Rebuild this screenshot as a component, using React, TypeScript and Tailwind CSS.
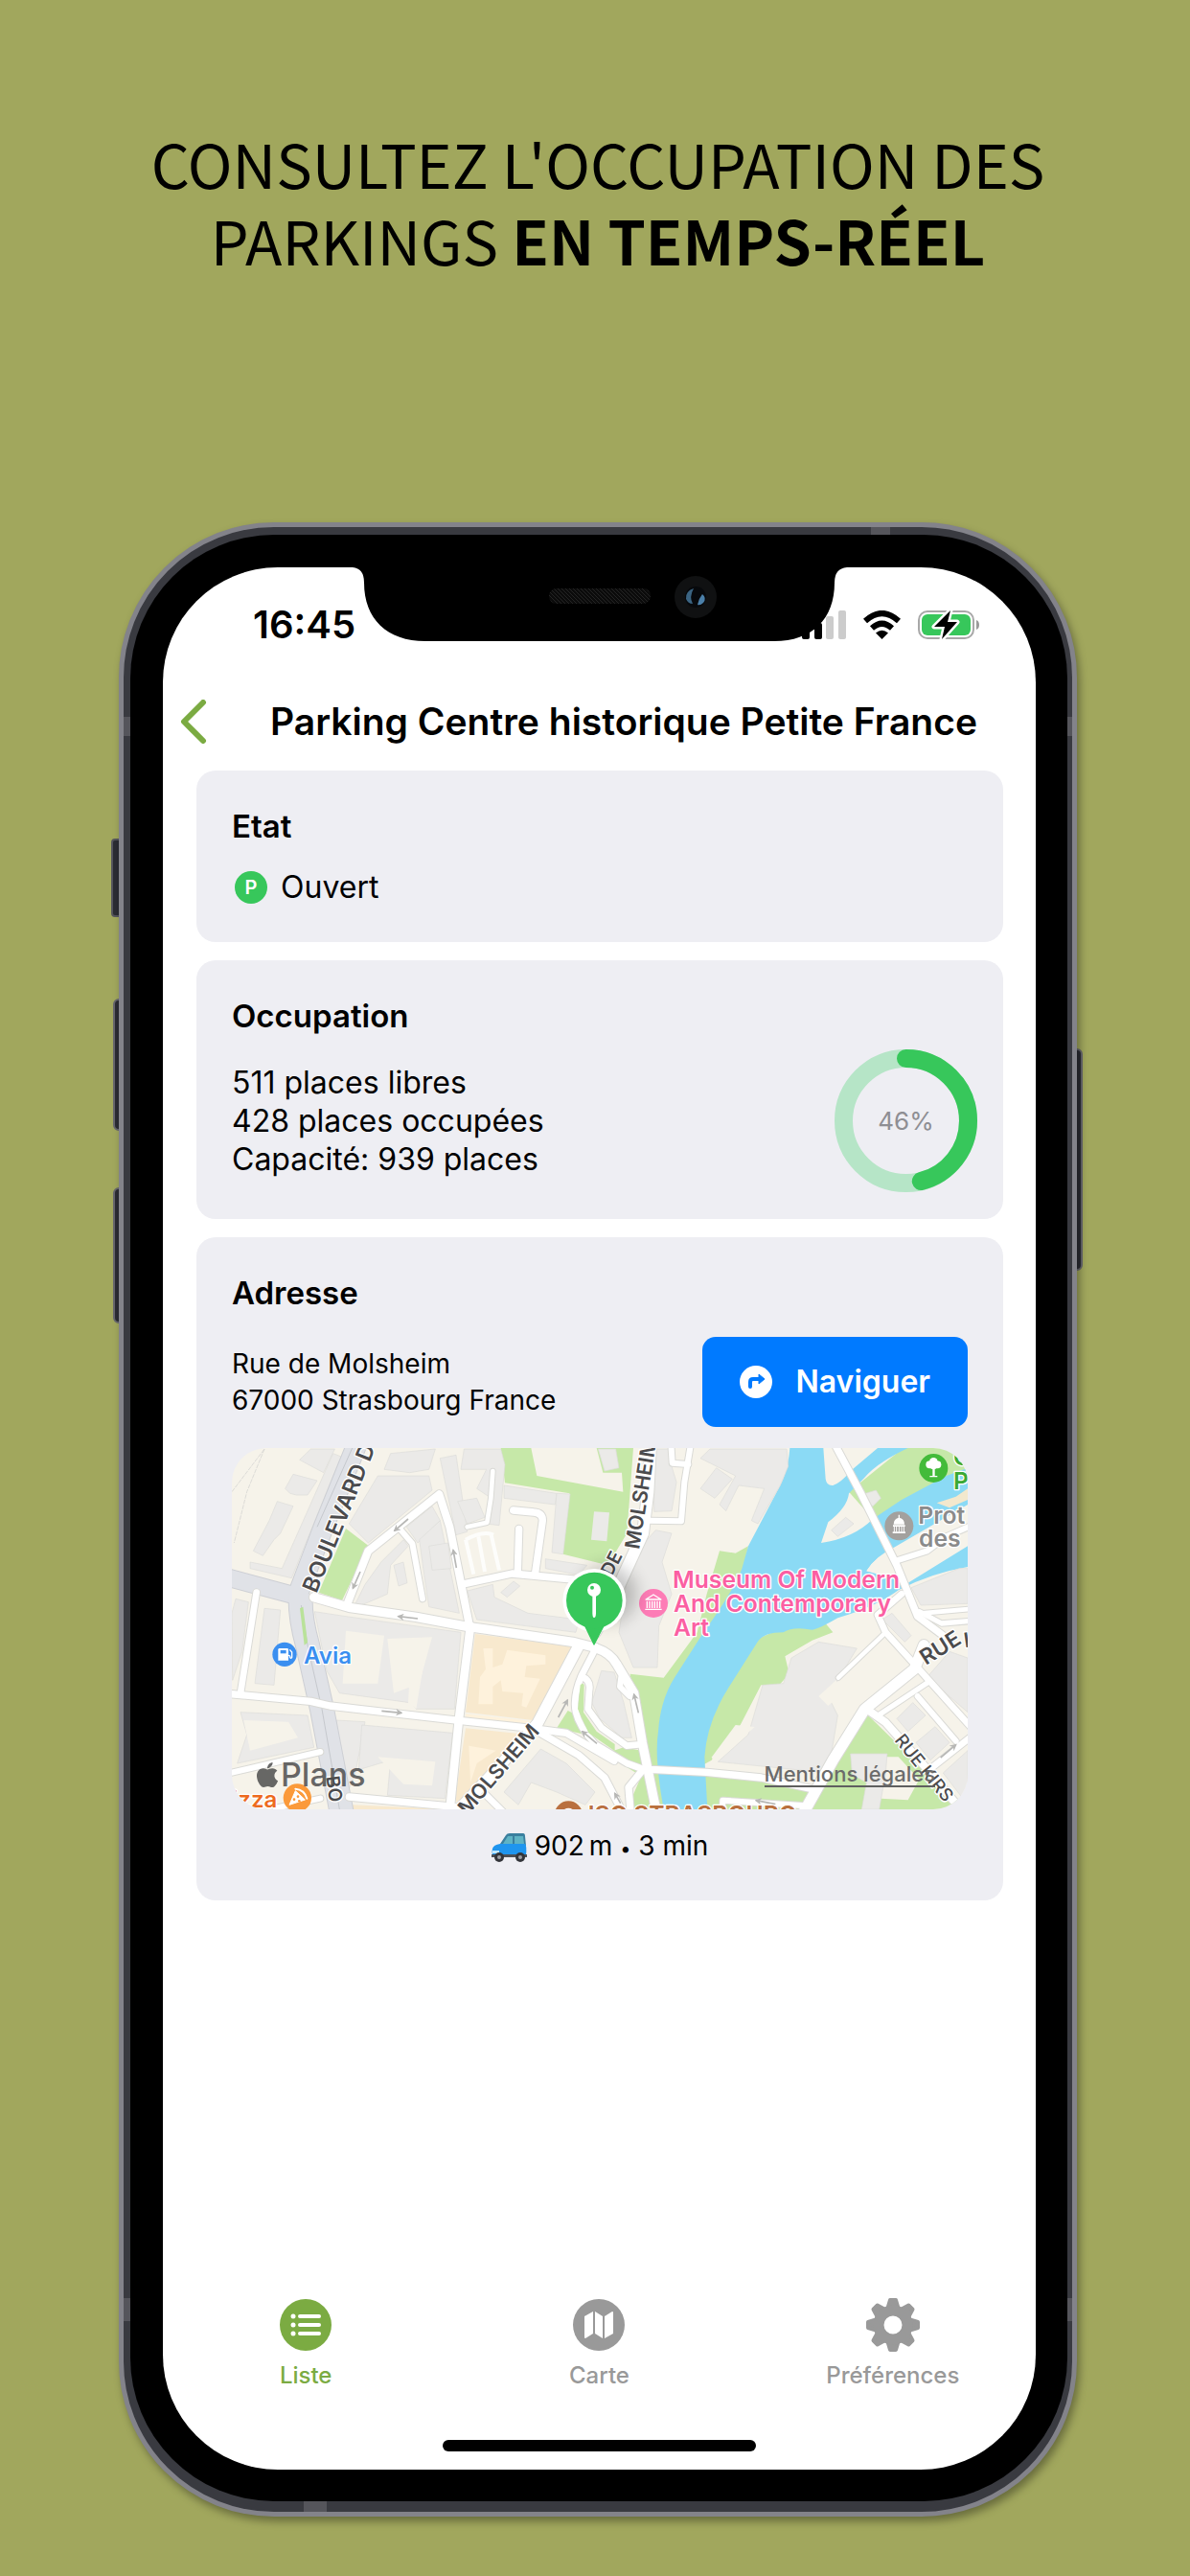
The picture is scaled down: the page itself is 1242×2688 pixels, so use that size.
import type { ReactNode } from 'react';
import { FaApple } from 'react-icons/fa';

type Road = { d: string; w: number };

const roads: Road[] = [
  { d: 'M320 530 L430 562 L640 592 L800 622 L1130 670 L1200 688', w: 28 },
  { d: 'M424 552 L490 385 L712 208 L745 310 L805 610', w: 24 },
  { d: 'M592 320 L628 362 L660 535', w: 18 },
  { d: 'M792 488 L940 456 L1130 474', w: 22 },
  { d: 'M958 450 L962 316', w: 22 },
  { d: 'M1012 460 L1036 290 Q1036 266 1008 264 L944 258', w: 22 },
  { d: 'M880 135 L874 220 L862 296 L800 310', w: 14 },
  { d: 'M810 620 L774 910 L744 1210', w: 26 },
  { d: 'M50 832 L310 856 L370 870 L774 916 L1000 940 L1110 955 L1260 1042', w: 22 },
  { d: 'M140 515 L90 830', w: 20 },
  { d: 'M50 1082 L340 1014', w: 18 },
  { d: 'M200 1190 L340 1160', w: 18 },
  { d: 'M430 1155 L760 1186', w: 22 },
  { d: 'M1374 50 L1366 200 L1350 330 L1240 570 L1200 640', w: 36 },
  { d: 'M1150 680 L1020 925 L900 1060 L760 1210', w: 34 },
  { d: 'M1200 694 L1158 775 Q1130 840 1140 890 Q1150 935 1200 990 L1300 1050 L1350 1068', w: 20 },
  { d: 'M1158 778 Q1188 790 1182 822 L1178 880 L1220 938 L1300 995 L1350 990', w: 20 },
  { d: 'M1200 688 Q1250 705 1268 740 L1322 830 L1348 985 L1394 1210', w: 28 },
  { d: 'M1282 780 L1278 810 L1308 840', w: 18 },
  { d: 'M1012 945 L1150 1025 L1230 1095 L1290 1210', w: 22 },
  { d: 'M1350 1070 L1390 1070 L1550 1078 L1720 1095 L1890 1132', w: 22 },
  { d: 'M1350 1070 L1305 1125 L1312 1210', w: 22 },
  { d: 'M860 1150 L920 1210', w: 20 },
  { d: 'M1372 290 L1470 292 L1480 170 L1500 50', w: 18 },
  { d: 'M1438 50 L1442 110 L1492 114', w: 18 },
  { d: 'M1950 50 L2030 200 L2145 430 L2210 590 L2290 650', w: 22 },
  { d: 'M2145 415 L2240 385 L2300 340 L2380 305', w: 18 },
  { d: 'M2160 520 L2085 585 L2110 640 L2205 745 L2380 940', w: 20 },
  { d: 'M2110 640 L1962 782', w: 14 },
  { d: 'M2230 680 L2200 755 L2045 880 L1945 1040 L1850 1210', w: 34 },
  { d: 'M2215 575 L2285 612 L2380 604', w: 16 },
  { d: 'M2225 580 L2380 566', w: 14 },
  { d: 'M2050 880 L2110 922 L2240 1068 L2350 1200', w: 24 },
  { d: 'M2090 898 L2245 795', w: 16 },
  { d: 'M2210 840 L2330 980', w: 18 },
  { d: 'M2240 1075 L2380 965', w: 20 },
  { d: 'M1598 1210 L1600 1166 L1850 1182', w: 18 },
];

const buildings = [
  '275,100 310,66 385,66 350,140',
  '230,190 255,145 330,165 300,210 265,210 245,205',
  '180,290 205,230 255,245 215,330 195,350 160,400 130,385',
  '120,420 220,440 380,80 405,90 250,470 120,440',
  '540,130 560,80 700,66 680,130 620,140',
  '430,300 520,150 680,150 690,195 490,360',
  '715,95 765,85 800,325 765,335',
  '780,130 790,66 905,66 918,115 900,305 860,300 875,220 830,190 860,130',
  '770,230 830,220 855,280 800,300',
  '915,180 1080,205 1075,240 915,220',
  '1080,205 1122,207 1100,395 1065,390',
  '1045,410 1175,430 1150,460 1045,440',
  '445,560 480,490 530,420 600,350 615,370 560,430 550,520 480,550',
  '570,430 600,420 612,485 585,495',
  '610,310 690,245 715,290 645,360',
  '650,350 715,290 775,580 680,560 665,460',
  '680,370 740,360 750,440 690,445',
  '800,510 880,490 885,530 990,580 1150,600 1140,640 830,600',
  '905,515 945,480 965,495 925,530',
  '322,575 420,590 780,640 760,880 640,880 620,860 400,830 360,760',
  '75,535 115,545 95,700 65,790 63,580',
  '165,565 215,570 195,805 135,800',
  '90,890 300,900 320,1000 80,1050 110,960',
  '390,915 480,920 450,1080 430,1130 400,1000',
  '470,930 755,955 730,1160 550,1150 560,1040 460,1070',
  '915,1140 1030,1005 1110,1050 1200,1140 1170,1180 1080,1140 1000,1110 960,1180',
  '1190,860 1220,760 1260,765 1290,860 1315,970 1285,970 1215,910',
  '1210,66 1265,66 1275,125 1230,135',
  '1385,66 1430,66 1440,120 1455,170 1440,260 1385,262',
  '1310,410 1390,320 1440,330 1410,420 1440,520 1400,620 1395,750 1320,750 1275,640',
  '1530,190 1580,125 1630,160 1575,220',
  '1560,66 1800,66 1805,120 1780,180 1710,300 1690,290 1730,190 1650,180 1610,260 1590,240 1640,150 1530,95',
  '1585,1045 1680,960 1725,805 1790,800 1815,720 1900,670 2020,690 1930,840 1960,900 1930,1080',
  '1940,320 1985,280 2010,300 1960,340',
  '2030,210 2080,195 2095,220 2070,245',
  '2190,500 2340,440 2367,440 2367,550 2220,555',
  '2100,600 2130,580 2190,650 2170,670',
  '2240,780 2310,700 2367,720 2367,890',
  '2145,910 2195,860 2235,900 2180,950',
  '2205,985 2265,935 2310,985 2250,1040',
  '2000,1020 2115,1020 2110,1080 2090,1194 2035,1194 2050,1110 2005,1085',
  '2290,1080 2367,1010 2367,1180',
];

const courtyards = [
  '420,635 540,650 520,800 410,800',
  '550,660 690,655 650,800 570,830',
  '620,770 660,760 640,880 615,860',
  '100,915 240,920 270,970 120,1010',
  '520,1030 700,1045 690,1120 600,1115',
  '1900,840 1955,790 1975,830 1930,870',
  '1640,930 1700,936 1570,1050 1566,1030',
];

const shafts = [
  [615, 285, 572, 322], [465, 450, 442, 502], [766, 438, 756, 382], [645, 597, 584, 590],
  [532, 886, 594, 892], [1085, 906, 1114, 852], [1206, 988, 1160, 950], [1336, 892, 1322, 834],
  [1280, 1175, 1262, 1144], [1765, 1178, 1704, 1166], [2282, 1032, 2330, 992],
];

function CityMap() {
  return (
    <svg className="block h-full w-full" viewBox="63 63 2304 1131" preserveAspectRatio="xMidYMid slice" role="img" aria-label="Carte du quartier">
      <defs>
        <marker id="tip" viewBox="0 0 10 10" refX="8" refY="5" markerWidth="22" markerHeight="22" markerUnits="userSpaceOnUse" orient="auto">
          <path d="M0 0 L10 5 L0 10 L3 5 Z" fill="#b7b7b5" />
        </marker>
        <filter id="soft" x="-50%" y="-50%" width="200%" height="200%">
          <feGaussianBlur stdDeviation="26" />
        </filter>
      </defs>
      <rect x="63" y="63" width="2304" height="1131" fill="#f6f3ea" />
      <g fill="#c6e8a8">
        <path d="M905 63 H1000 L1018 150 L1288 200 L1284 140 L1225 140 L1205 63 H1320 L1300 330 L1240 430 L1100 395 L1120 205 L918 172 Z" />
        <path d="M420 315 L490 368 L408 540 L335 515 Z" />
        <path d="M1115 885 L1080 940 L1170 960 L1145 900 Z" />
        <path d="M1590 385 L1640 392 L1680 370 L1660 460 L1600 700 L1480 1194 H1300 L1345 1090 L1230 1020 L1290 1000 L1345 1010 L1310 770 L1415 782 L1520 640 L1550 520 Z" />
        <path d="M1710 660 L1800 620 L1920 610 L1945 640 L1880 665 L1795 715 L1808 770 L1770 812 L1720 805 L1655 930 L1565 1040 L1530 1060 L1530 900 Z" />
        <path d="M1530 1090 L1720 1100 L1890 1135 L1850 1194 H1540 Z" />
        <path d="M2050 895 L2240 1080 L2367 1194 H1870 L1980 1010 Z" />
        <path d="M2165 63 H2367 V240 L2200 270 L2070 285 L1995 200 Z" />
      </g>
      <path fill="#f6f3ea" d="M2110 1030 L2150 1030 L2215 1100 L2180 1165 L2095 1160 Z" />
      <path
        fill="#8bdaf5"
        d="M1810 63 H1915 L1922 160 Q1925 182 1945 180 Q1970 172 2000 135 L2085 63 H2180 Q2080 110 2040 160 L1995 205 Q1990 250 1930 295 L1908 360 Q2010 345 2070 285 L2160 225 L2300 150 L2367 125 V240 L2140 372 Q2080 400 2050 448 L2180 485 L2367 370 V435 Q2250 455 2150 508 Q2080 560 1960 595 Q1900 630 1880 632 Q1820 620 1790 640 Q1730 640 1710 668 L1620 810 Q1550 920 1543 1030 L1552 1194 H1415 Q1385 1030 1398 950 Q1405 850 1450 780 L1540 640 Q1640 500 1660 440 L1680 370 L1780 180 Q1805 130 1810 63 Z"
      />
      <path fill="#f6f3ea" d="M2050 448 Q2080 400 2120 390 L2160 440 L2180 480 L2130 462 Z" />
      <path fill="#f3e8cd" d="M2270 235 L2330 215 L2367 190 V225 L2310 250 Z" />
      <g fill="#f8e9ce">
        <path d="M825 645 L1130 685 L1005 915 L795 890 Z" />
        <path d="M795 940 L990 960 L770 1180 L762 1160 Z" />
        <path d="M440 1180 L745 1194 H440 Z" />
      </g>
      <g fill="#fef2dc">
        <path d="M850 690 L880 690 L880 750 L910 740 L925 695 L1045 712 L1045 740 L985 745 L980 780 L1028 785 L985 875 L970 870 L975 830 L910 825 L905 790 L880 810 L880 865 L835 865 L840 780 L858 755 Z" />
        <path d="M805 995 L890 1010 L830 1050 L810 1110 Z" />
        <path d="M795 895 L1000 918 L1000 935 L795 912 Z" />
      </g>
      <g fill="#ebeae8" stroke="#dddcd9" strokeWidth="2">
        {buildings.map((points) => (
          <polygon key={points} points={points} />
        ))}
      </g>
      <g fill="#f6f3ea">
        {courtyards.map((points) => (
          <polygon key={points} points={points} />
        ))}
      </g>
      <polygon points="1197,262 1245,265 1237,355 1188,350" fill="#ebeae8" />
      <g fill="none" stroke="#fdfdfb" strokeWidth="12">
        <path d="M795 350 L820 458 M835 340 L855 450 M875 335 L900 445 M795 350 Q850 320 882 335" />
      </g>
      <g fill="none" stroke="#cfcfcd" strokeWidth="2" strokeDasharray="14 3">
        <path d="M63 200 L165 66 M165 66 L110 200 L70 360" />
      </g>
      <g fill="none" strokeLinejoin="round">
        <path d="M50 468 L250 522 L300 530" stroke="#cdcfd4" strokeWidth="58" />
        <path d="M270 520 L350 310 L455 50" stroke="#cdcfd4" strokeWidth="66" />
        <path d="M278 520 Q275 590 300 680 L345 880 L408 1210" stroke="#cdcfd4" strokeWidth="78" />
        <path d="M50 468 L250 522 L300 530" stroke="#e0e2e7" strokeWidth="52" />
        <path d="M270 520 L350 310 L455 50" stroke="#e0e2e7" strokeWidth="60" />
        <path d="M278 520 Q275 590 300 680 L345 880 L408 1210" stroke="#e0e2e7" strokeWidth="72" />
        <path d="M280 555 L300 680 L345 880 L400 1194 M330 310 L440 63" stroke="#c5c8cd" strokeWidth="3" />
      </g>
      <path d="M276 565 L286 560 L300 672 L290 680 Z" fill="#b9e29a" />
      <g fill="none" stroke="#dadad6" strokeLinecap="round" strokeLinejoin="round">
        {roads.map((road) => (
          <path key={road.d} d={road.d} strokeWidth={road.w + 6} />
        ))}
      </g>
      <g fill="none" stroke="#ffffff" strokeLinecap="round" strokeLinejoin="round">
        {roads.map((road) => (
          <path key={road.d} d={road.d} strokeWidth={road.w} />
        ))}
      </g>
      <path d="M1154 805 Q1162 795 1166 805 L1164 890 L1205 950 L1262 990 L1262 1012 L1180 955 L1146 880 Z" fill="#c6e8a8" />
      <g stroke="#b7b7b5" strokeWidth="5">
        {shafts.map(([x1, y1, x2, y2]) => (
          <line key={`${x1}-${y1}`} x1={x1} y1={y1} x2={x2} y2={y2} markerEnd="url(#tip)" />
        ))}
      </g>

      <g fontFamily="Inter, sans-serif" paintOrder="stroke" strokeLinejoin="round">
        <g fill="#4b4b4d" stroke="#ffffff" strokeWidth="8" fontWeight="600" fontSize="64">
          <text transform="translate(328 520) rotate(-68)" fontSize="70">BOULEVARD D</text>
          <text transform="translate(1252 468) rotate(-63)" fontSize="58">DE</text>
          <text transform="translate(1338 382) rotate(-81)">MOLSHEIM</text>
          <text transform="translate(800 1215) rotate(-49)">MOLSHEIM</text>
          <text transform="translate(2236 744) rotate(-32)" fontSize="68">RUE</text>
          <text transform="translate(2358 688) rotate(-8)">L</text>
          <text transform="translate(358 1092) rotate(82)" fontSize="58">BO</text>
          <text transform="translate(2136 978) rotate(51)" fontSize="56" fontWeight="500">RUE KIRS</text>
        </g>

        <g stroke="#ffffff" strokeWidth="8" fontWeight="600" fontSize="74">
          <text x="288" y="738" fill="#3b8ff0" fontSize="72">Avia</text>
          <text x="205" y="1187" fill="#ed6b1e" fontSize="72" textAnchor="end">Pizza</text>
          <g fill="#fb5fa2">
            <text x="1443" y="501">Museum Of Modern</text>
            <text x="1446" y="576">And Contemporary</text>
            <text x="1446" y="651">Art</text>
          </g>
          <g fill="#8b8b8b">
            <text x="2212" y="299">Prot</text>
            <text x="2214" y="373">des</text>
          </g>
          <g fill="#3aa935">
            <text x="2322" y="118">C</text>
            <text x="2322" y="192">P</text>
          </g>
          <text x="1178" y="1236" fill="#b9703f">ISG STRASBOURG</text>
        </g>
      </g>

      <circle cx="228" cy="709" r="38" fill="#3b8ff0" />
      <path d="M212 690 h24 q4 0 4 4 v34 h-32 v-34 q0 -4 4 -4 Z" fill="#ffffff" />
      <rect x="215" y="696" width="18" height="10" fill="#3b8ff0" />
      <path d="M240 712 q6 0 5 6 q2 6 6 0 v-16 l-7 -8" fill="none" stroke="#ffffff" strokeWidth="4" />

      <circle cx="268" cy="1158" r="44" fill="#fb9a3a" />
      <path d="M243 1180 L262 1136 L292 1164 Z" fill="#ffffff" stroke="#ffffff" strokeWidth="3" strokeLinejoin="round" />
      <path d="M262 1130 Q290 1132 298 1160" fill="none" stroke="#ffffff" strokeWidth="6" strokeLinecap="round" />
      <g fill="#fb9a3a">
        <circle cx="258" cy="1163" r="4" />
        <circle cx="270" cy="1154" r="4" />
        <circle cx="274" cy="1168" r="4" />
      </g>

      <circle cx="1117" cy="1212" r="44" fill="#b9703f" />
      <circle cx="1117" cy="1212" r="22" fill="#ffffff" />

      <circle cx="1383" cy="549" r="45" fill="#fd7cb6" />
      <g fill="none" stroke="#ffffff" strokeWidth="4" strokeLinejoin="round">
        <path d="M1359 537 L1383 522 L1407 537 Z" />
        <path d="M1363 542 V564 M1371 542 V564 M1379 542 V564 M1387 542 V564 M1395 542 V564 M1403 542 V564 M1357 568 H1409" />
      </g>

      <circle cx="2152" cy="307" r="45" fill="#a3a19e" />
      <path d="M2135 302 Q2135 284 2152 281 Q2169 284 2169 302 Z M2150 272 h4 v12 h-4 Z M2133 304 h38 v5 h-38 Z M2132 325 h40 v5 h-40 Z" fill="#ffffff" />
      <path d="M2137 309 V326 M2144 309 V326 M2152 309 V326 M2160 309 V326 M2167 309 V326" stroke="#ffffff" strokeWidth="3" />

      <circle cx="2260" cy="126" r="45" fill="#43bb3a" />
      <g fill="#ffffff">
        <circle cx="2248" cy="115" r="12" />
        <circle cx="2272" cy="115" r="12" />
        <circle cx="2260" cy="106" r="13" />
        <circle cx="2260" cy="118" r="12" />
        <path d="M2257 124 h7 v26 h8 v4 h-24 v-4 h9 Z" />
      </g>

      <ellipse cx="1240" cy="520" rx="90" ry="90" fill="#000000" opacity="0.22" filter="url(#soft)" />
      <circle cx="1198" cy="540" r="99" fill="#ffffff" />
      <path d="M1197 678 L1168 618 H1228 Z" fill="#37c75b" stroke="#37c75b" strokeWidth="4" strokeLinejoin="round" />
      <circle cx="1198" cy="540" r="88" fill="#37c75b" />
      <circle cx="1197" cy="507" r="21" fill="#ffffff" />
      <circle cx="1191" cy="500" r="6" fill="#37c75b" />
      <path d="M1192 524 H1203 V580 Q1203 594 1197 594 Q1192 594 1192 580 Z" fill="#ffffff" />
    </svg>
  );
}

function Notch() {
  return (
    <svg className="absolute top-0 left-1/2 -ml-[258px] h-[77px] w-[516px]" viewBox="0 0 516 77" aria-hidden="true">
      <defs>
        <pattern id="mesh" width="4" height="4" patternUnits="userSpaceOnUse">
          <rect width="4" height="4" fill="#0b0b0b" />
          <path d="M0 0 L4 4" stroke="#242424" strokeWidth="1" />
        </pattern>
      </defs>
      <path d="M0 0 Q12 1 12 16 C12 54 36 77 76 77 H440 C480 77 503 54 503 16 Q503 1 516 0 Z" fill="#000000" />
      <rect x="205" y="22" width="106" height="16" rx="8" fill="url(#mesh)" />
      <circle cx="358" cy="31" r="22" fill="#101112" />
      <circle cx="358" cy="31" r="11" fill="#07090c" />
      <path d="M356 22 Q347 25 348 33 Q350 38 355 38 Q351 31 356 22 Z" fill="#3b6482" />
      <path d="M360 39 Q361 33 365 28 Q370 32 366 37 Q363 40 360 39 Z" fill="#4b7fa8" />
    </svg>
  );
}

function StatusIcons() {
  return (
    <div className="flex items-center gap-[18px]">
      <svg className="h-[30px] w-[46px]" viewBox="0 0 46 30" role="img" aria-label="Réseau mobile">
        <rect x="0" y="19" width="8" height="11" rx="2" fill="#000000" />
        <rect x="13" y="13" width="8" height="17" rx="2" fill="#000000" />
        <rect x="25" y="6" width="8" height="24" rx="2" fill="#cccccc" />
        <rect x="38" y="0" width="8" height="30" rx="2" fill="#cccccc" />
      </svg>
      <svg className="h-[30px] w-[39px]" viewBox="0 0 39 30" role="img" aria-label="Wi-Fi">
        <g fill="none" stroke="#000000" strokeWidth="6">
          <path d="M2 11 Q19.500 -5 37 11" />
          <path d="M9 18.500 Q19.500 9 30 18.500" />
        </g>
        <path d="M13 23.500 Q19.500 18 26 23.500 L19.500 30 Z" fill="#000000" />
      </svg>
      <svg className="h-[32px] w-[64px]" viewBox="0 0 64 32" role="img" aria-label="Batterie en charge">
        <rect x="1" y="2" width="57" height="28" rx="9" fill="none" stroke="#a8a8a8" strokeWidth="2" />
        <rect x="4" y="5" width="51" height="22" rx="6" fill="#37c75b" />
        <path d="M61 11 Q64 12 64 16 Q64 20 61 21 Z" fill="#9a9a9a" />
        <path d="M34 1 L17 18 H28 L25 31 L41 13 H31 Z" fill="#000000" stroke="#ffffff" strokeWidth="5" strokeLinejoin="round" paintOrder="stroke" />
      </svg>
    </div>
  );
}

function OccupancyRing({ percent }: { percent: number }) {
  const length = 2 * Math.PI * 65;
  return (
    <div className="relative -mr-[10px] h-[149px] w-[149px] shrink-0">
      <svg className="h-full w-full" viewBox="0 0 149 149" aria-hidden="true">
        <circle cx="74.500" cy="74.500" r="65" fill="none" stroke="#b6e5c7" strokeWidth="19" />
        <circle
          cx="74.500"
          cy="74.500"
          r="65"
          fill="none"
          stroke="#37c75b"
          strokeWidth="19"
          strokeLinecap="round"
          strokeDasharray={`${(length * percent) / 100} ${length}`}
          transform="rotate(-90 74.500 74.500)"
        />
      </svg>
      <span className="absolute inset-0 flex items-center justify-center text-[26px] text-[#8e8e93]">{percent}%</span>
    </div>
  );
}

function Car() {
  return (
    <svg className="h-[32px] w-[37px]" viewBox="0 0 37 32" role="img" aria-label="En voiture">
      <path d="M9 12 L15 3 Q16 1 19 1 H33 Q35 1 35 4 L36 14 Z" fill="#3a7f9e" />
      <path d="M12 12 L17 4 H22 V12 Z M24 12 V4 H33 L34 12 Z" fill="#5fb3c4" />
      <path d="M1 17 Q2 13 9 12 H35 Q37 14 36 24 H1 Q0 20 1 17 Z" fill="#1f95ee" />
      <path d="M1 19 H8 V22 H1 Z" fill="#bfe6fb" />
      <path d="M0 23 H37 V26 H0 Z" fill="#4c4f55" />
      <circle cx="8" cy="26" r="5" fill="#33353a" />
      <circle cx="8" cy="26" r="2" fill="#9c9ea3" />
      <circle cx="30" cy="26" r="5" fill="#33353a" />
      <circle cx="30" cy="26" r="2" fill="#9c9ea3" />
    </svg>
  );
}

function ListIcon() {
  return (
    <svg className="h-[56px] w-[56px]" viewBox="0 0 56 56" aria-hidden="true">
      <circle cx="28" cy="28" r="27" fill="#7bab42" />
      <g fill="#ffffff">
        {[19, 28, 37].map((y) => (
          <g key={y}>
            <circle cx="15" cy={y} r="2.500" />
            <rect x="20" y={y - 2} width="24" height="4" rx="2" />
          </g>
        ))}
      </g>
    </svg>
  );
}

function MapIcon() {
  return (
    <svg className="h-[56px] w-[56px]" viewBox="0 0 56 56" aria-hidden="true">
      <circle cx="28" cy="28" r="27" fill="#999999" />
      <g fill="#ffffff">
        <path d="M13 19 L22 14 V37 L14 42 Q13 42 13 41 Z" />
        <path d="M24 14 L32 19 V42 L24 37 Z" />
        <path d="M34 19 L42 14 Q43 14 43 15 V37 L34 42 Z" />
      </g>
    </svg>
  );
}

function GearIcon() {
  return (
    <svg className="h-[56px] w-[56px]" viewBox="-28 -28 56 56" aria-hidden="true">
      <g fill="#999999" stroke="#999999" strokeWidth="4" strokeLinejoin="round">
        {[0, 45, 90, 135, 180, 225, 270, 315].map((angle) => (
          <path key={angle} d="M-6 -16 L-3 -26 H3 L6 -16 Z" transform={`rotate(${angle})`} />
        ))}
      </g>
      <circle r="15" fill="none" stroke="#999999" strokeWidth="11" />
    </svg>
  );
}

function Card({ title, className, children }: { title: string; className: string; children: ReactNode }) {
  return (
    <section className={`rounded-[20px] bg-[#eeeef3] px-[37px] pt-[38px] ${className}`}>
      <h2 className="text-[33px] leading-[40px] font-semibold">{title}</h2>
      {children}
    </section>
  );
}

const tabs = [
  { label: 'Liste', icon: <ListIcon />, color: 'text-[#7bab42]' },
  { label: 'Carte', icon: <MapIcon />, color: 'text-[#999999]' },
  { label: 'Préférences', icon: <GearIcon />, color: 'text-[#999999]' },
];

function Screen() {
  return (
    <div className="relative flex flex-1 flex-col overflow-hidden rounded-[120px] bg-white font-[Inter,sans-serif] text-black">
      <div className="flex items-center justify-between pt-9 pr-[59px] pl-[94px]">
        <span className="text-[40px] leading-[48px] font-semibold">16:45</span>
        <StatusIcons />
      </div>
      <Notch />
      <header className="flex items-center pt-[26px] pr-[13px] pl-[18px]">
        <button type="button" aria-label="Retour" className="flex h-[102px] w-[46px] items-center">
          <svg className="h-[46px] w-[28px]" viewBox="0 0 28 46" fill="none" stroke="#7bab42" strokeWidth="6" strokeLinecap="round" strokeLinejoin="round">
            <path d="M24 3 L4 23 L24 43" />
          </svg>
        </button>
        <h1 className="flex-1 text-center text-[39px] leading-[48px] font-semibold">Parking Centre historique Petite France</h1>
      </header>

      <main className="flex flex-col gap-[19px] pr-[34px] pl-[35px]">
        <Card title="Etat" className="pb-[37px]">
          <p className="mt-6 flex items-center gap-[14px] text-[32px] leading-[40px]">
            <span className="ml-[3px] flex h-[34px] w-[34px] items-center justify-center rounded-full bg-[#37c75b] text-[20px] leading-[20px] font-semibold text-white">P</span>
            Ouvert
          </p>
        </Card>

        <Card title="Occupation" className="pb-7">
          <div className="mt-[15px] flex items-center justify-between">
            <p className="text-[32px] leading-[40px]">
              511 places libres
              <br />
              428 places occupées
              <br />
              Capacité: 939 places
            </p>
            <OccupancyRing percent={46} />
          </div>
        </Card>

        <Card title="Adresse" className="pb-[34px]">
          <div className="mt-[26px] flex items-center justify-between">
            <address className="text-[28px] leading-[38px] not-italic">
              Rue de Molsheim
              <br />
              67000 Strasbourg France
            </address>
            <button type="button" className="flex h-[94px] items-center gap-6 rounded-[14px] bg-[#007aff] px-[39px] text-[32px] font-semibold text-white">
              <svg className="h-[34px] w-[34px]" viewBox="0 0 34 34" aria-hidden="true">
                <circle cx="17" cy="17" r="17" fill="#ffffff" />
                <path d="M11 22 V17 Q11 14 14 14 H20" fill="none" stroke="#007aff" strokeWidth="4" strokeLinecap="round" />
                <path d="M20 9 L26 14 L20 19 Z" fill="#007aff" stroke="#007aff" strokeWidth="1" strokeLinejoin="round" />
              </svg>
              Naviguer
            </button>
          </div>
          <div className="relative mt-[22px] h-[377px] overflow-hidden rounded-[36px]">
            <CityMap />
            <span className="absolute bottom-[18px] left-[23px] flex items-center text-[34px] leading-[36px] font-medium text-[#4d4d4d]/85">
              <FaApple className="h-[30px] w-[28px]" aria-hidden="true" />
              Plans
            </span>
            <a href="#mentions" className="absolute right-[34px] bottom-[23px] border-b-2 border-[#5f5f5f] text-[22px] leading-[24px] font-medium text-[#6b6b6b]">
              Mentions légales
            </a>
          </div>
          <p className="mt-[18px] flex items-center justify-center gap-2 text-[28px] leading-[40px]">
            <Car />
            <span>
              {'902\u2009m '}
              <span className="text-[20px]">•</span>
              {' 3 min'}
            </span>
          </p>
        </Card>
      </main>

      <nav className="-mx-1 mt-auto grid grid-cols-3">
        {tabs.map((tab) => (
          <button key={tab.label} type="button" className={`flex flex-col items-center gap-[11px] text-[24px] leading-[28px] font-medium ${tab.color}`}>
            {tab.icon}
            {tab.label}
          </button>
        ))}
      </nav>
      <div className="mx-auto mt-[53px] mb-[19px] h-3 w-[327px] rounded-full bg-black" />
    </div>
  );
}

export default function App() {
  return (
    <div className="flex min-h-screen flex-col bg-[#a1a75d] pt-[130px] pr-[118px] pb-[62px] pl-[124px]">
      <p className="text-center font-['Noto_Sans_CJK_SC',sans-serif] text-[63px] leading-[80px] text-black">
        CONSULTEZ L'OCCUPATION DES
        <br />
        PARKINGS <strong className="font-bold">EN TEMPS-RÉEL</strong>
      </p>
      <div className="relative mt-[255px] flex flex-1 flex-col">
        <span className="absolute top-[330px] -left-2 h-[82px] w-3 rounded-l-sm border-2 border-[#55555c] bg-[#2b2c33]" />
        <span className="absolute top-[497px] -left-[6px] h-[138px] w-3 rounded-l-md border-2 border-[#66666d] bg-[#2b2c33]" />
        <span className="absolute top-[694px] -left-[6px] h-[142px] w-3 rounded-l-md border-2 border-[#66666d] bg-[#2b2c33]" />
        <span className="absolute top-[549px] -right-[6px] h-[232px] w-3 rounded-r-md border-2 border-[#66666d] bg-[#2b2c33]" />
        <div className="relative flex flex-1 flex-col rounded-[162px] border-[5px] border-[#83838a] bg-[#393a40] pt-2 pr-[5px] pb-[11px] pl-[7px] shadow-[3px_5px_8px_rgba(0,0,0,0.35)]">
          <span className="absolute top-0 right-[190px] h-2 w-5 bg-[#55555b]" />
          <span className="absolute bottom-0 left-[188px] h-[11px] w-6 bg-[#55555b]" />
          <span className="absolute top-[198px] left-0 h-5 w-[7px] bg-[#55555b]" />
          <span className="absolute top-[198px] right-0 h-5 w-[5px] bg-[#55555b]" />
          <span className="absolute bottom-[199px] left-0 h-6 w-[7px] bg-[#55555b]" />
          <span className="absolute right-0 bottom-[199px] h-6 w-[5px] bg-[#55555b]" />
          <div className="flex flex-1 flex-col rounded-[150px] bg-black pt-[34px] pr-[33px] pb-[33px] pl-[34px]">
            <Screen />
          </div>
        </div>
      </div>
    </div>
  );
}
